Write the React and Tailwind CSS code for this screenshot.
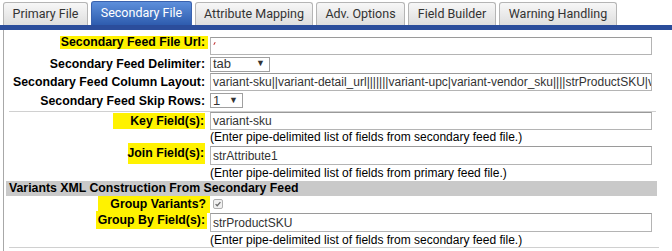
import { useState } from 'react'

const tabs = [
  { name: 'Primary File', w: 'w-[85px]' },
  { name: 'Secondary File', w: 'w-[101px]', active: true },
  { name: 'Attribute Mapping', w: 'w-[118px]' },
  { name: 'Adv. Options', w: 'w-[89px]' },
  { name: 'Field Builder', w: 'w-[88px]' },
  { name: 'Warning Handling', w: 'w-[118px]' },
]

const label = "font-['Liberation_Sans',Arial,sans-serif] font-bold text-[12.3px] text-black whitespace-nowrap"
const field = "font-['Liberation_Sans',Arial,sans-serif] text-[12px] text-[#333]"
const hl = 'flex justify-end bg-[#fff200]'

function TextBox({ value, className = '' }) {
  return (
    <div
      className={`w-[442px] border border-[#b4b4b4] border-t-[#9a9a9a] bg-white pl-[2px] overflow-hidden whitespace-nowrap flex items-center ${field} ${className}`}
    >
      {value}
    </div>
  )
}

function Select({ value, w }) {
  return (
    <div
      className={`${w} h-[15px] border border-[#a0a0a0] bg-white flex items-center justify-between pl-[2px] pr-[4px] ${field} text-[13px] text-[#111]`}
    >
      <span>{value}</span>
      <span className="text-[9px]">▼</span>
    </div>
  )
}

function Hint({ children, h }) {
  return (
    <div className={`${h} flex items-center pl-[206px] ${field} text-[12.7px] text-black whitespace-nowrap`}>{children}</div>
  )
}

export default function App() {
  const [tab, setTab] = useState('Secondary File')

  return (
    <div className="w-[672px] h-[251px] bg-white overflow-hidden relative">
      <div className="flex items-end gap-[3px] pl-[3px] pt-[1px] h-[25px]">
        {tabs.map((t) => {
          const on = t.name === tab
          return (
            <button
              key={t.name}
              onClick={() => setTab(t.name)}
              className={`${t.w} rounded-t-[3px] border border-b-0 flex items-center justify-center whitespace-nowrap font-['Roboto',sans-serif] text-[12.5px] ${
                on
                  ? 'h-[24px] border-[#3a62ae] bg-gradient-to-b from-[#5d8fdb] to-[#2e5cae] text-white'
                  : 'h-[23px] border-[#b5b5b5] bg-gradient-to-b from-[#f7f7f7] to-[#dedede] text-[#333]'
              }`}
            >
              {t.name}
            </button>
          )
        })}
      </div>
      <div className="h-[5px] bg-[#2b4d9b]" />

      <div className="ml-[3px] border-l border-[#a8a8a8] h-[230px] pt-[5px]">
        {/* Url */}
        <div className="flex items-start h-[21px]">
          <div className="w-[204px] flex justify-end">
            <span className={`mt-[1px] h-[13px] leading-[13px] w-[148px] pr-[3px] ${hl} ${label}`}>
              Secondary Feed File Url:
            </span>
          </div>
          <TextBox
            className="ml-[2px] mt-[2px] h-[18px]"
            value={<span className="inline-block w-[1px] h-[3px] bg-[#c03030] rotate-[30deg] ml-[1px] -mt-[6px]" />}
          />
        </div>

        {/* Delimiter */}
        <div className="flex items-center h-[16px]">
          <div className={`w-[204px] flex justify-end pr-[3px] ${label}`}>Secondary Feed Delimiter:</div>
          <div className="ml-[2px]">
            <Select value="tab" w="w-[60px]" />
          </div>
        </div>

        {/* Column Layout */}
        <div className="flex items-center h-[20px]">
          <div className={`w-[204px] flex justify-end pr-[3px] ${label}`}>Secondary Feed Column Layout:</div>
          <TextBox
            className="ml-[2px] h-[18px]"
            value="variant-sku||variant-detail_url|||||||variant-upc|variant-vendor_sku||||strProductSKU|variant-price"
          />
        </div>

        {/* Skip Rows */}
        <div className="flex items-center h-[19px]">
          <div className={`w-[204px] flex justify-end pr-[3px] ${label}`}>Secondary Feed Skip Rows:</div>
          <div className="ml-[2px] -mt-[2px]">
            <Select value="1" w="w-[33px]" />
          </div>
        </div>

        <div className="ml-[5px] w-[647px] h-[1px] bg-[#d0d0d0]" />

        {/* Key */}
        <div className="flex items-start h-[18px]">
          <div className="w-[204px] flex justify-end">
            <span className={`mt-[1px] h-[16px] leading-[16px] w-[92px] mr-[3px] pr-[1px] ${hl} ${label}`}>
              Key Field(s):
            </span>
          </div>
          <TextBox className="ml-[2px] h-[18px]" value="variant-sku" />
        </div>
        <Hint h="h-[13px]">(Enter pipe-delimited list of fields from secondary feed file.)</Hint>

        {/* Join */}
        <div className="flex items-start h-[22px]">
          <div className="w-[204px] flex justify-end">
            <span className={`h-[21px] leading-[21px] w-[77px] mr-[3px] pr-[1px] ${hl} ${label}`}>
              Join Field(s):
            </span>
          </div>
          <TextBox className="ml-[2px] mt-[3px] h-[19px]" value="strAttribute1" />
        </div>
        <Hint h="h-[16px]">(Enter pipe-delimited list of fields from primary feed file.)</Hint>

        {/* Section header */}
        <div className={`ml-[2px] w-[651px] h-[15px] leading-[15px] bg-[#c9c9c9] pl-[3px] ${label}`}>
          Variants XML Construction From Secondary Feed
        </div>

        {/* Group Variants */}
        <div className="flex items-start h-[16px]">
          <div className="w-[204px] flex justify-end">
            <span className={`h-[17px] leading-[17px] w-[112px] -mr-[2px] pr-[4px] ${hl} ${label}`}>
              Group Variants?
            </span>
          </div>
          <div className="ml-[5px] mt-[3px] w-[10px] h-[10px] border border-[#b0b0b0] bg-[#f0f0f0] rounded-[2px] flex items-center justify-center">
            <svg viewBox="0 0 10 10" className="w-[8px] h-[8px]">
              <path d="M2 5.2 L4 7.2 L8 2.6" fill="none" stroke="#6a6a6a" strokeWidth="1.6" />
            </svg>
          </div>
        </div>

        {/* Group By */}
        <div className="flex items-start h-[20px]">
          <div className="w-[204px] flex justify-end">
            <span className={`-mt-[1px] h-[18px] leading-[18px] w-[111px] mr-[1px] pr-[2px] ${hl} ${label}`}>
              Group By Field(s):
            </span>
          </div>
          <TextBox className="ml-[2px] mt-[1px] h-[19px]" value="strProductSKU" />
        </div>
        <Hint h="h-[15px]">(Enter pipe-delimited list of fields from secondary feed file.)</Hint>

        <div className="ml-[5px] w-[650px] h-[1px] bg-[#d0d0d0]" />
      </div>
    </div>
  )
}
